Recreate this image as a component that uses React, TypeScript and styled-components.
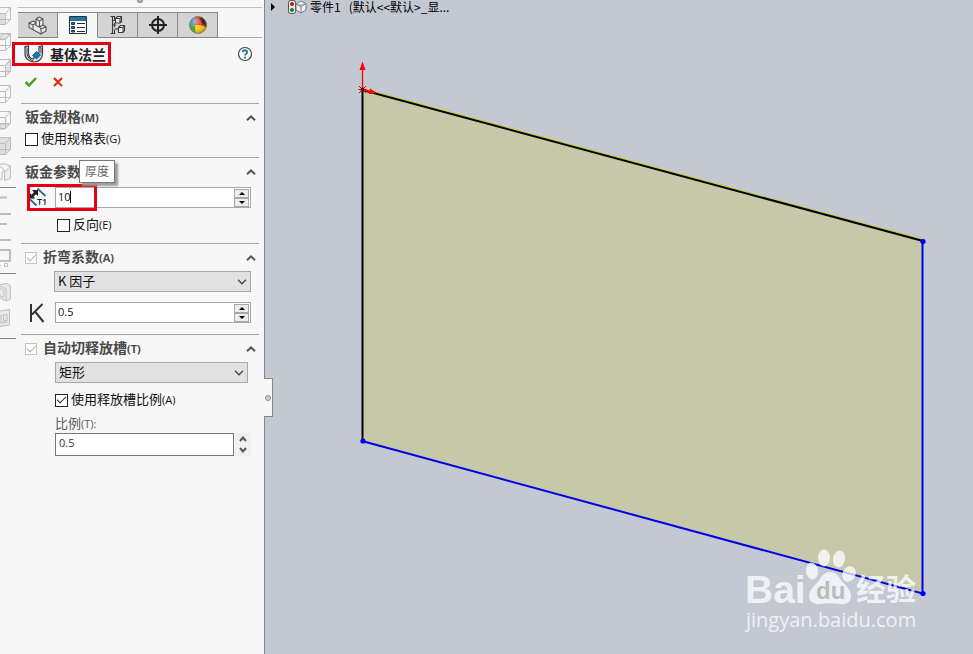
import React from "react";
import styled, { createGlobalStyle } from "styled-components";

const ui = '"Open Sans", "Noto Sans CJK SC", sans-serif';
const cjk = '"Noto Sans CJK SC", "Open Sans", sans-serif';

const GlobalStyle = createGlobalStyle`
  *, *::before, *::after { box-sizing: border-box; }
  body { margin: 0; background: #c4c8d3; font-family: ${ui}; font-size: 11px; color: #111; }
  button, input, select { font: inherit; color: inherit; margin: 0; }
`;

const Shell = styled.div`
  display: flex;
  min-height: 100vh;
`;

const Panel = styled.aside`
  position: relative;
  display: flex;
  flex: none;
  width: 265px;
  background: #f7f7f7;
  border-right: 1px solid #85878c;
`;

const Rail = styled.nav`
  flex: none;
  width: 18px;
`;

const RailGroup = styled.div<{ $top: number; $bottom: number }>`
  display: flex;
  flex-direction: column;
  width: 16px;
  padding: ${(p) => p.$top}px 0 ${(p) => p.$bottom}px;
  border-bottom: 1px solid #858585;
`;

const RailButton = styled.button`
  display: block;
  width: 12px;
  height: 26px;
  padding: 0;
  border: 0;
  background: none;
  svg { display: block; }
`;

const Pane = styled.div`
  flex: 1;
  min-width: 0;
`;

const Grip = styled.div`
  display: flex;
  justify-content: center;
  height: 8px;
  margin-right: 2px;
  border-bottom: 1px solid #c2c2c2;
  &::before {
    content: "";
    width: 6px;
    height: 3px;
    border-radius: 0 0 3px 3px;
    background: #b4b4b4;
    border: 1px solid #8c8c8c;
    border-top: 0;
  }
`;

const Tabs = styled.div`
  display: flex;
  height: 26px;
  margin: 4px 2px 4px 0;
  box-shadow: inset 0 -1px #a6a6a6;
`;

const Tab = styled.button<{ $active?: boolean }>`
  display: grid;
  place-items: center;
  width: 40px;
  padding: 0;
  border: solid #868686;
  border-width: 1px 1px 1px 0;
  border-bottom-color: ${(p) => (p.$active ? "#f7f7f7" : "#868686")};
  background: ${(p) => (p.$active ? "#f7f7f7" : "#d4d4d4")};
`;

const TitleRow = styled.header`
  display: flex;
  align-items: center;
  justify-content: space-between;
  height: 24px;
  margin: 0 11px 0 -6px;
`;

const Title = styled.h1`
  display: flex;
  align-items: center;
  gap: 6px;
  height: 24px;
  margin: 0;
  padding: 0 2px 0 9px;
  border: 3px solid #e60012;
  font: 700 14px/18px ${cjk};
  color: #222;
`;

const IconButton = styled.button`
  display: grid;
  place-items: center;
  width: 16px;
  height: 16px;
  padding: 0;
  border: 0;
  background: none;
`;

const Actions = styled.div`
  display: flex;
  gap: 11px;
  padding: 8px 0 13px 5px;
`;

const Section = styled.section`
  margin: 0 5px 0 3px;
  padding: 4px 3px 11px 4px;
  border-top: 1px solid #a5a5a8;
`;

const SectionHead = styled.div<{ $gap: number }>`
  display: flex;
  align-items: center;
  justify-content: space-between;
  height: 20px;
  margin-bottom: ${(p) => p.$gap}px;
`;

const Heading = styled.h2`
  margin: 0;
  padding-bottom: 2px;
  font: 700 14px/18px ${cjk};
  color: #4a4a4a;
  white-space: nowrap;
`;

const Key = styled.span`
  font-family: "Open Sans", sans-serif;
  font-size: 11px;
`;

const Collapse = styled.button`
  display: grid;
  place-items: center;
  width: 10px;
  height: 14px;
  padding: 0;
  border: 0;
  background: none;
`;

const Fields = styled.div<{ $indent?: boolean }>`
  display: flex;
  flex-direction: column;
  gap: 10px;
  padding-left: ${(p) => (p.$indent ? 30 : 0)}px;
`;

const CheckLabel = styled.label<{ $indent?: boolean; $heading?: boolean }>`
  display: flex;
  align-items: center;
  gap: ${(p) => (p.$heading ? 6 : 3)}px;
  height: 14px;
  margin-left: ${(p) => (p.$indent ? 32 : 0)}px;
  font: 13px/14px ${cjk};
  white-space: nowrap;
`;

const CheckText = styled.span`
  padding-bottom: 2px;
`;

const Check = styled.input.attrs({ type: "checkbox" })<{ $pale?: boolean }>`
  appearance: none;
  display: grid;
  place-items: center;
  flex: none;
  width: ${(p) => (p.$pale ? 12 : 13)}px;
  height: ${(p) => (p.$pale ? 12 : 13)}px;
  border: 1px solid ${(p) => (p.$pale ? "#c4c4c4" : "#222")};
  background: #fff;
  &:checked::after {
    content: "";
    width: 9px;
    height: 5px;
    margin-top: -3px;
    border: solid ${(p) => (p.$pale ? "#adadad" : "#222")};
    border-width: 0 0 1px 1px;
    transform: rotate(-45deg);
  }
`;

const FieldRow = styled.div`
  position: relative;
  display: flex;
  align-items: center;
  height: 21px;
  margin-right: 5px;
`;

const FieldIcon = styled.span`
  display: flex;
  flex: none;
  width: 30px;
  padding-left: 4px;
`;

const SpinBox = styled.div`
  position: relative;
  display: flex;
  flex: 1;
  min-width: 0;
  height: 21px;
  border: 1px solid #a8a8aa;
  background: #fff;
`;

const SpinInput = styled.input`
  flex: 1;
  min-width: 0;
  padding: 0 2px 2px;
  border: 0;
  outline: 0;
  background: none;
`;

const Caret = styled.i`
  position: absolute;
  left: 14px;
  top: 3px;
  width: 1px;
  height: 12px;
  background: #000;
`;

const Steps = styled.div`
  display: flex;
  flex-direction: column;
  width: 17px;
  padding: 1px 1px 0;
`;

const Step = styled.button`
  display: grid;
  place-items: center;
  flex: 1;
  padding: 0;
  border: 1px solid #a8a8a8;
  background: #ededed;
`;

const Highlight = styled.div`
  position: absolute;
  left: 2px;
  top: -3px;
  width: 70px;
  height: 27px;
  border: 3px solid #e60012;
  pointer-events: none;
`;

const Tooltip = styled.div`
  position: absolute;
  left: 54px;
  bottom: 25px;
  padding: 0 5px 1px;
  border: 1px solid #777;
  background: #fff;
  box-shadow: 3px 3px 2px #9b9b9b;
  font: 12px/20px ${cjk};
  color: #666;
`;

const SelectBox = styled.div`
  position: relative;
  margin-right: 8px;
  svg {
    position: absolute;
    right: 4px;
    top: 8px;
    pointer-events: none;
  }
`;

const WideSelect = styled(SelectBox)`
  flex: 1;
  margin: 0 0 0 -1px;
`;

const Select = styled.select`
  appearance: none;
  display: block;
  width: 100%;
  height: 21px;
  padding: 0 20px 2px 3px;
  border: 1px solid #a8a8aa;
  border-radius: 0;
  background: #e1e1e1;
  font: 13px/17px ${cjk};
`;

const Ratio = styled.div`
  display: flex;
  flex-direction: column;
  gap: 1px;
`;

const RatioLabel = styled.label`
  padding-bottom: 2px;
  font: 13px/12px ${cjk};
  color: #5a5a5a;
`;

const RatioRow = styled.div`
  display: flex;
  gap: 1px;
  margin-right: 5px;
`;

const RatioInput = styled.input`
  flex: 1;
  min-width: 0;
  height: 23px;
  padding: 0 3px 4px;
  border: 1px solid #777;
  background: #fff;
  color: #333;
`;

const RatioSteps = styled.div`
  display: flex;
  flex-direction: column;
  width: 16px;
  background: #f0f0f0;
`;

const RatioStep = styled.button`
  display: grid;
  place-items: center;
  flex: 1;
  padding: 0;
  border: 0;
  background: none;
`;

const Splitter = styled.button`
  position: absolute;
  left: 264px;
  top: 378px;
  z-index: 1;
  display: grid;
  place-items: center;
  width: 9px;
  height: 39px;
  padding: 0;
  border: 1px solid #85878c;
  border-left: 0;
  background: #f7f7f7;
  &::before {
    content: "";
    width: 6px;
    height: 6px;
    border: 1px solid #909090;
    border-radius: 50%;
    background: #cfcfcf;
  }
`;

const Viewport = styled.main`
  position: relative;
  flex: 1;
  min-width: 0;
  background: #c4c8d3;
`;

const TreeHead = styled.div`
  position: relative;
  z-index: 1;
  display: flex;
  align-items: center;
  height: 14px;
  padding-left: 6px;
  font: 12px/14px ${cjk};
  color: #000;
  white-space: nowrap;
`;

const PartIcon = styled.svg`
  margin: 0 3px 0 12px;
`;

const PartState = styled.span`
  margin-left: 8px;
`;

const Sketch = styled.svg`
  position: absolute;
  left: 0;
  top: 0;
  width: 100%;
  height: auto;
`;

const Logo = styled.svg`
  position: absolute;
  right: 50px;
  bottom: 18px;
`;

const ChevronUp = () => (
  <svg width="10" height="6" fill="none" stroke="#555" strokeWidth="2">
    <path d="M1 5.2 5 1.4 9 5.2" />
  </svg>
);

const ChevronDown = () => (
  <svg width="10" height="6" fill="none" stroke="#444" strokeWidth="1.3">
    <path d="M1 .8 5 4.8 9 .8" />
  </svg>
);

const StepArrow = ({ down }: { down?: boolean }) => (
  <svg width="8" height="6" fill="none" stroke="#555" strokeWidth="2">
    <path d={down ? "M1 1 4 4.500 7 1" : "M1 5 4 1.500 7 5"} />
  </svg>
);

const PartTabIcon = () => (
  <svg width="19" height="19" viewBox="-1 -1 19 19" fill="#ececec" stroke="#555" strokeWidth="1.1" strokeLinejoin="round">
    <path d="M0 6 4 4 7 5.500V2L10 0 14 2V8L17 10V14L12 17 0 10.500Z" />
    <path d="M0 6 4 8 7 6M4 8V12.500M7 2 10.500 4 14 2M10.500 4V10L14 8M7 5.500V8.500L10.500 10 12 12 17 10M12 12V17" fill="none" />
  </svg>
);

const ListTabIcon = () => (
  <svg width="18" height="18">
    <path d="M.5.5h17v17H.5z" fill="#fafafa" stroke="#24323b" />
    <path d="M1 1h16v4H1z" fill="#26749b" />
    <path d="M2.500 6.500h3v2h-3zM2.500 10.500h3v2h-3zM2.500 14.500h3v1.500h-3z" fill="#2c83ab" stroke="#24323b" />
    <path d="M8 7.500h8M8 11.500h8M8 15.500h8" stroke="#24323b" />
  </svg>
);

const TreeTabIcon = () => (
  <svg width="16" height="20" fill="none" stroke="#3b3b3b" strokeWidth="1.100">
    <path d="M2.500 1V18.500M.5 1.500H4.500V4.500M.5 18.500H4.500V15M2.500 10H6M2.500 5.500H6M4.500 8V12" />
    <path d="M5.500 3.500 7.500 1.500H11.500V6.500L10 8H5.500ZM5.500 3.500H10V8M10 3.500 11.500 1.500M8.500 12.500 10.500 10.500H14.500V15.500L13 17.500H8.500ZM8.500 12.500H13V17.500M13 12.500 14.500 10.500" fill="#f1f1f1" />
    <path d="M4.500 14H8.500" />
  </svg>
);

const TargetIcon = () => (
  <svg width="18" height="18" fill="none" stroke="#222" strokeWidth="2">
    <circle cx="9" cy="9" r="6" />
    <path d="M9 0V18M0 9H18" />
  </svg>
);

const BallIcon = () => (
  <svg width="20" height="20">
    <defs>
      <clipPath id="ball"><circle cx="10" cy="10" r="8.500" /></clipPath>
      <radialGradient id="shine" cx=".38" cy=".3" r=".7">
        <stop offset="0" stopColor="#fff" stopOpacity=".5" />
        <stop offset=".6" stopColor="#fff" stopOpacity="0" />
        <stop offset="1" stopColor="#000" stopOpacity=".3" />
      </radialGradient>
    </defs>
    <g clipPath="url(#ball)">
      <path d="M0 0H20V20H0Z" fill="#f4c914" />
      <path d="M0 0H9L7 10 0 12Z" fill="#2f8dc9" />
      <path d="M0 10 7 9.500 8 20H0Z" fill="#3da744" />
      <path d="M8 0H20V13L7 10Z" fill="#e8261c" />
      <path d="M7 10 12 10 20 13V20H8Z" fill="#f4c914" />
      <path d="M11 3 14 2 19 7 18.500 12 14 8Z" fill="#252525" />
    </g>
    <circle cx="10" cy="10" r="8.500" fill="url(#shine)" stroke="#80705a" strokeWidth=".7" />
  </svg>
);

const FlangeIcon = () => (
  <svg width="20" height="18" strokeLinejoin="round">
    <path d="M1 1.500 4.500.8V8C4.500 11 6.500 13.500 9 14L15 8V1.500L18.500.8V9C18.500 13 15 17 10.500 17 6 17 1 14 1 9Z" fill="#e3e8eb" stroke="#3a4045" strokeWidth="1.200" />
    <path d="M1 1.500 3 3.500V9C3.500 12.500 6 15 9.500 16M15 1.500 17 3V8.500" fill="none" stroke="#3a4045" />
    <path d="M8.500 10.500 12.500 6.500 16.500 10 12.500 14Z" fill="#1d7aa8" stroke="#175b7c" />
  </svg>
);

const HelpIcon = () => (
  <svg width="16" height="16" fill="none">
    <circle cx="8" cy="8" r="6.500" fill="#fff" stroke="#444" strokeWidth="1.200" />
    <path d="M5.800 6.200C5.800 3.600 10.200 3.600 10.200 6.100 10.200 7.600 8 7.700 8 9.500" stroke="#1e75a0" strokeWidth="1.800" />
    <path d="M7 10.700h2v1.700H7z" fill="#1e75a0" />
  </svg>
);

const ThicknessIcon = () => (
  <svg width="21" height="20" viewBox="0 0 21 20">
    <path d="M8.500 .5 16.500 8M.5 11 7.500 17.500" stroke="#1f7298" strokeWidth="1.800" />
    <path d="M3 2H9V8L7 6.200 4.500 8.700 6.500 10.500H.5V4.500L2.500 6.700 5 4.200Z" fill="#222" />
    <text x="8" y="17" fontFamily="Open Sans" fontSize="9" fontWeight="600" fill="#222">T1</text>
  </svg>
);

const BigK = () => (
  <svg width="16" height="20" fill="none" stroke="#333" strokeWidth="2">
    <path d="M2 1V19M13.500 1 3 11.500M6 8.500 14.500 19" />
  </svg>
);

const Cube = ({ side }: { side: number }) => (
  <svg width="12" height="26" fill="none" stroke="#bdbdbd">
    {side === 0 && <path d="M0 10H5V21H0z" fill="#ddd" stroke="none" />}
    {side === 1 && <path d="M0 9 2 5H11L5 10H0" fill="#e4e4e4" />}
    {side === 2 && <path d="M5.500 10.500 10.500 4.500V16.500L5.500 21.500Z" fill="#e2e2e2" />}
    {side === 4 && <path d="M0 17H10L5 22H0z" fill="#e2e2e2" />}
    {side === 5 && <path d="M0 5H10V16L5 21H0z" fill="#dedede" stroke="none" />}
    <path d="M0 10.500H5.500V21.500H0M5.500 10.500 10.500 4.500V16.500L5.500 21.500M0 4.500H10.500M0 16.500H10" />
  </svg>
);

const ViewIcon = ({ kind }: { kind: string }) => (
  <svg width="12" height="26" fill="none" stroke="#bebebe">
    {kind === "round" && <path d="M0 5.500 3 4.500 10.500 7V19.500L4.500 21.500V13.500L10.500 7M4.500 13.500C4.500 10 2 8 0 8M0 21 2 20V13L4.500 12" fill="#ededed" />}
    {kind === "rows" && <path d="M0 8.500H7M0 25H11" strokeWidth="2" />}
    {kind === "lines" && <path d="M0 9H7M0 25H11" strokeWidth="2" />}
    {kind === "screen" && <path d="M0 9H10V20H0" strokeWidth="2" />}
    {kind === "screen" && <path d="M4.500 22.500h3v3h-3zM0 24.500h1" />}
    {kind === "shell" && <path d="M0 5.500 7 4.500 10.500 7V20L6 22 0 19M6 22V10L0 7M0 9 4 11V18L0 17" fill="#e8e8e8" />}
    {kind === "box" && <path d="M0 6 9.500 4.500V20L0 21.500M1 10.500 7 9.500V17L1 18ZM3.500 11V16L7 15" fill="#e8e8e8" />}
  </svg>
);

const SpinSteps = () => (
  <Steps>
    <Step aria-label="增加"><svg width="6" height="3"><path d="M0 3 3 0 6 3Z" /></svg></Step>
    <Step aria-label="减少"><svg width="6" height="3"><path d="M0 0 3 3 6 0Z" /></svg></Step>
  </Steps>
);

const CollapseButton = () => (
  <Collapse aria-label="折叠"><ChevronUp /></Collapse>
);

const Watermark = () => (
  <Logo width="178" height="88" viewBox="0 0 178 88" fill="#fff" fillOpacity=".75">
    <text x="0" y="55" fontFamily="Liberation Sans" fontWeight="700" fontSize="39">Bai</text>
    <ellipse cx="67" cy="23" rx="6" ry="8.500" transform="rotate(-8 67 23)" />
    <ellipse cx="79" cy="10" rx="6" ry="8.500" />
    <ellipse cx="94" cy="11" rx="6" ry="8.500" transform="rotate(10 94 11)" />
    <ellipse cx="104" cy="26" rx="6.500" ry="8" transform="rotate(25 104 26)" />
    <path d="M85 24C90 24 93 27 96 32 101 38 106 42 106 48 106 54 101 57 95 56 89 55 81 55 76 56 68 57 64 53 64 48 64 41 71 37 75 31 78 26 81 24 85 24Z" />
    <text x="71" y="51" fontFamily="Liberation Sans" fontWeight="700" fontSize="24" fill="#b9bcc2" fillOpacity="1">du</text>
    <text x="111" y="52" fontFamily="Noto Sans CJK SC" fontWeight="700" fontSize="30">经验</text>
    <text x="1" y="79" fontFamily="Open Sans" fontSize="20">jingyan.baidu.com</text>
  </Logo>
);

export default function App() {
  return (
    <>
      <GlobalStyle />
      <Shell>
        <Panel>
          <Rail>
            <RailGroup $top={3} $bottom={2}>
              {[0, 1, 2, 3, 4, 5].map((side) => (
                <RailButton key={side} aria-label="视图方向"><Cube side={side} /></RailButton>
              ))}
              <RailButton aria-label="等轴测"><ViewIcon kind="round" /></RailButton>
            </RailGroup>
            <RailGroup $top={1} $bottom={6}>
              {["rows", "lines", "screen"].map((kind) => (
                <RailButton key={kind} aria-label="显示"><ViewIcon kind={kind} /></RailButton>
              ))}
            </RailGroup>
            <RailGroup $top={5} $bottom={7}>
              {["shell", "box"].map((kind) => (
                <RailButton key={kind} aria-label="特征"><ViewIcon kind={kind} /></RailButton>
              ))}
            </RailGroup>
          </Rail>

          <Pane>
            <Grip />
            <Tabs role="tablist">
              <Tab role="tab" aria-label="设计树"><PartTabIcon /></Tab>
              <Tab role="tab" aria-label="属性" aria-selected $active><ListTabIcon /></Tab>
              <Tab role="tab" aria-label="配置"><TreeTabIcon /></Tab>
              <Tab role="tab" aria-label="尺寸专家"><TargetIcon /></Tab>
              <Tab role="tab" aria-label="外观"><BallIcon /></Tab>
            </Tabs>

            <TitleRow>
              <Title><FlangeIcon />基体法兰</Title>
              <IconButton aria-label="帮助"><HelpIcon /></IconButton>
            </TitleRow>
            <Actions>
              <IconButton aria-label="确定">
                <svg width="14" height="12" fill="none" stroke="#45a321" strokeWidth="2.500"><path d="M1.500 6 5 9.500 12 2" /></svg>
              </IconButton>
              <IconButton aria-label="取消">
                <svg width="10" height="10" fill="none" stroke="#d9300f" strokeWidth="2.200"><path d="M1 1 9 9M9 1 1 9" /></svg>
              </IconButton>
            </Actions>

            <Section>
              <SectionHead $gap={4}>
                <Heading>钣金规格<Key>(M)</Key></Heading>
                <CollapseButton />
              </SectionHead>
              <CheckLabel><Check /><CheckText>使用规格表<Key>(G)</Key></CheckText></CheckLabel>
            </Section>

            <Section>
              <SectionHead $gap={5}>
                <Heading>钣金参数</Heading>
                <CollapseButton />
              </SectionHead>
              <Fields>
                <FieldRow>
                  <FieldIcon><ThicknessIcon /></FieldIcon>
                  <SpinBox>
                    <SpinInput aria-label="厚度" defaultValue="10" />
                    <Caret />
                    <SpinSteps />
                  </SpinBox>
                  <Highlight />
                  <Tooltip role="tooltip">厚度</Tooltip>
                </FieldRow>
                <CheckLabel $indent><Check /><CheckText>反向<Key>(E)</Key></CheckText></CheckLabel>
              </Fields>
            </Section>

            <Section>
              <SectionHead $gap={3}>
                <CheckLabel $heading>
                  <Check $pale defaultChecked />
                  <Heading>折弯系数<Key>(A)</Key></Heading>
                </CheckLabel>
                <CollapseButton />
              </SectionHead>
              <Fields>
                <FieldRow>
                  <FieldIcon />
                  <WideSelect>
                    <Select aria-label="折弯系数类型"><option>K 因子</option></Select>
                    <ChevronDown />
                  </WideSelect>
                </FieldRow>
                <FieldRow>
                  <FieldIcon><BigK /></FieldIcon>
                  <SpinBox>
                    <SpinInput aria-label="K 因子" defaultValue="0.5" />
                    <SpinSteps />
                  </SpinBox>
                </FieldRow>
              </Fields>
            </Section>

            <Section>
              <SectionHead $gap={3}>
                <CheckLabel $heading>
                  <Check $pale defaultChecked />
                  <Heading>自动切释放槽<Key>(T)</Key></Heading>
                </CheckLabel>
                <CollapseButton />
              </SectionHead>
              <Fields $indent>
                <SelectBox>
                  <Select aria-label="释放槽类型"><option>矩形</option></Select>
                  <ChevronDown />
                </SelectBox>
                <CheckLabel><Check defaultChecked /><CheckText>使用释放槽比例<Key>(A)</Key></CheckText></CheckLabel>
                <Ratio>
                  <RatioLabel htmlFor="ratio">比例<Key>(T):</Key></RatioLabel>
                  <RatioRow>
                    <RatioInput id="ratio" defaultValue="0.5" />
                    <RatioSteps>
                      <RatioStep aria-label="增加"><StepArrow /></RatioStep>
                      <RatioStep aria-label="减少"><StepArrow down /></RatioStep>
                    </RatioSteps>
                  </RatioRow>
                </Ratio>
              </Fields>
            </Section>
          </Pane>
          <Splitter aria-label="收起面板" />
        </Panel>

        <Viewport>
          <TreeHead>
            <svg width="5" height="8"><path d="M0 0 4 4 0 8Z" /></svg>
            <PartIcon width="19" height="14">
              <rect x=".5" y=".5" width="7" height="13" rx="2" fill="#e8e8e0" stroke="#555" />
              <circle cx="4" cy="4" r="2" fill="#b51c1c" />
              <circle cx="4" cy="10" r="2" fill="#157a2c" />
              <path d="M8 4 13 1 18 3.500V10L13 13 8 10ZM8 4 13 6.500 18 3.500M13 6.500V13" fill="#f0f0f0" stroke="#777" />
            </PartIcon>
            <span>零件1</span>
            <PartState>{"(默认<<默认>_显..."}</PartState>
          </TreeHead>
          <Sketch viewBox="0 0 708 654" fill="none">
            <path d="M97 90 658 241 657 593 97 441Z" fill="#c5c8a9" />
            <path d="M97 89 658 240" stroke="#c9c71c" strokeWidth="2" />
            <path d="M97.500 441V90L658 241" stroke="#000" strokeWidth="2" />
            <path d="M657.500 241V593.500L97 441" stroke="#0000e6" strokeWidth="2" />
            <g fill="#0000f0">
              <circle cx="658" cy="241.500" r="2.600" />
              <circle cx="658" cy="593.500" r="2.600" />
              <circle cx="98" cy="441" r="2.600" />
            </g>
            <path d="M97.500 89V66M97 89.500 106 92" stroke="#f00" strokeWidth="1.300" />
            <path d="M94.500 70 97.500 61.500 100.500 70ZM105 88.500 112 93 104 94Z" fill="#f00" />
            <path d="M94 86 101 93M101 86 94 93M93.500 89.500H101.500" stroke="#d00" />
            <circle cx="97.500" cy="89.500" r="2" fill="#700" />
          </Sketch>
          <Watermark />
        </Viewport>
      </Shell>
    </>
  );
}
